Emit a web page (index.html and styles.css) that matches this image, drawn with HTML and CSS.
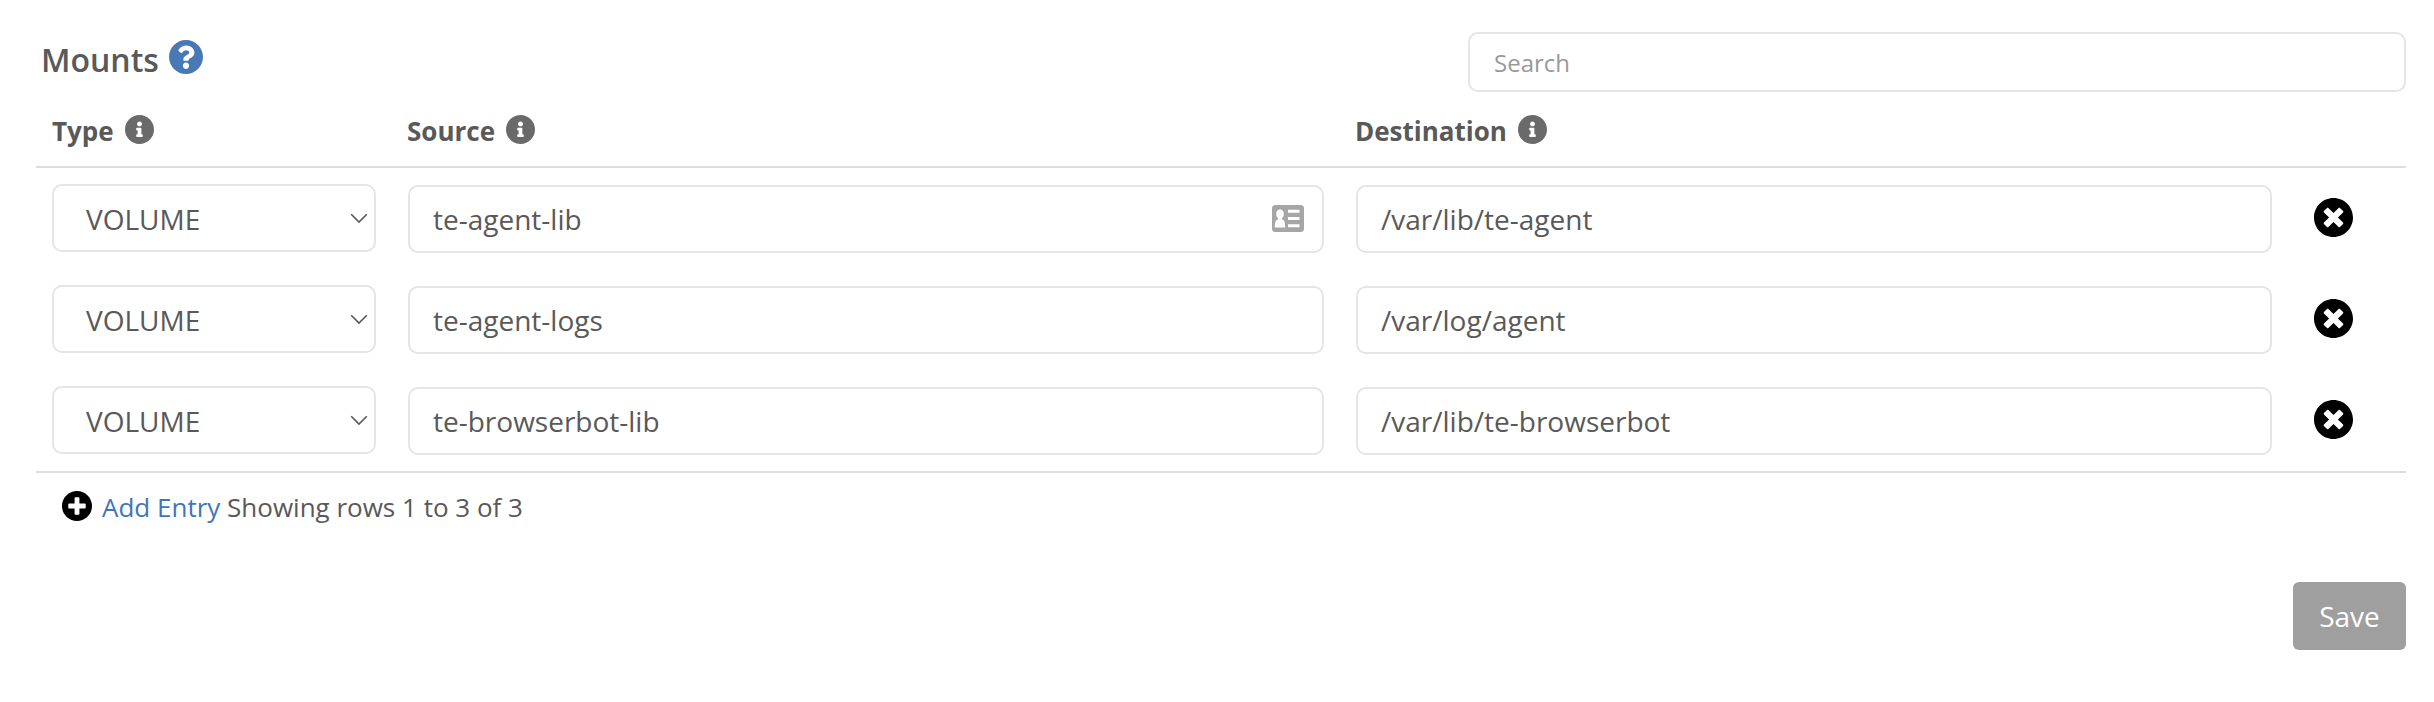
FILE: index.html
```
<!DOCTYPE html>
<html lang="en">
<head>
<meta charset="utf-8">
<title>Mounts</title>
<link rel="stylesheet" href="styles.css">
</head>
<body>
<svg class="defs" width="0" height="0" aria-hidden="true">
  <symbol id="i-question" viewBox="8 8 496 496"><path d="M504 256c0 136.997-111.043 248-248 248S8 392.997 8 256C8 119.083 119.043 8 256 8s248 111.083 248 248zM262.655 90c-54.497 0-89.255 22.957-116.549 63.758-3.536 5.286-2.353 12.415 2.715 16.258l34.699 26.31c5.205 3.947 12.621 3.008 16.665-2.122 17.864-22.658 30.113-35.797 57.303-35.797 20.429 0 45.698 13.148 45.698 32.958 0 14.976-12.363 22.667-32.534 33.976C247.128 238.528 216 254.941 216 296v4c0 6.627 5.373 12 12 12h56c6.627 0 12-5.373 12-12v-1.333c0-28.462 83.186-29.647 83.186-106.667 0-58.002-60.165-102-116.531-102zM256 338c-25.365 0-46 20.635-46 46 0 25.364 20.635 46 46 46s46-20.636 46-46c0-25.365-20.635-46-46-46z"/></symbol>
  <symbol id="i-info" viewBox="8 8 496 496"><path d="M256 8C119.043 8 8 119.083 8 256c0 136.997 111.043 248 248 248s248-111.003 248-248C504 119.083 392.957 8 256 8zm0 110c23.196 0 42 18.804 42 42s-18.804 42-42 42-42-18.804-42-42 18.804-42 42-42zm56 254c0 6.627-5.373 12-12 12h-88c-6.627 0-12-5.373-12-12v-24c0-6.627 5.373-12 12-12h12v-64h-12c-6.627 0-12-5.373-12-12v-24c0-6.627 5.373-12 12-12h64c6.627 0 12 5.373 12 12v100h12c6.627 0 12 5.373 12 12v24z"/></symbol>
  <symbol id="i-remove" viewBox="8 8 496 496"><path d="M256 8C119 8 8 119 8 256s111 248 248 248 248-111 248-248S393 8 256 8zm121.600 313.100c4.700 4.700 4.700 12.300 0 17L338 377.600c-4.700 4.700-12.300 4.700-17 0L256 312l-65.100 65.600c-4.700 4.700-12.300 4.700-17 0L134.400 338c-4.700-4.700-4.700-12.300 0-17l65.600-65-65.600-65.100c-4.700-4.700-4.700-12.300 0-17l39.600-39.600c4.700-4.700 12.300-4.700 17 0l65 65.700 65.100-65.600c4.700-4.700 12.300-4.700 17 0l39.600 39.600c4.700 4.700 4.700 12.300 0 17L312 256l65.600 65.100z"/></symbol>
  <symbol id="i-plus" viewBox="8 8 496 496"><path d="M256 8C119 8 8 119 8 256s111 248 248 248 248-111 248-248S393 8 256 8zm144 276c0 6.600-5.400 12-12 12h-92v92c0 6.600-5.400 12-12 12h-56c-6.600 0-12-5.400-12-12v-92h-92c-6.600 0-12-5.400-12-12v-56c0-6.600 5.400-12 12-12h92v-92c0-6.600 5.400-12 12-12h56c6.600 0 12 5.400 12 12v92h92c6.600 0 12 5.400 12 12v56z"/></symbol>
  <symbol id="i-chevron" viewBox="0 0 18 11"><path d="M1.200 1.200 9 9l7.800-7.800" fill="none" stroke="currentColor" stroke-width="1.600"/></symbol>
</svg>
<main class="mounts">
  <header class="top">
    <h2 class="title">Mounts <svg class="help"><use href="#i-question"/></svg></h2>
    <input class="field search" type="text" placeholder="Search">
  </header>
  <section class="table">
    <div class="row head">
      <div class="label">Type <svg class="info"><use href="#i-info"/></svg></div>
      <div class="label">Source <svg class="info"><use href="#i-info"/></svg></div>
      <div class="label">Destination <svg class="info"><use href="#i-info"/></svg></div>
    </div>
    <div class="row">
      <div class="select-wrap"><select class="field select"><option>VOLUME</option></select><svg class="chevron"><use href="#i-chevron"/></svg></div>
      <div class="input-wrap">
        <input class="field" type="text" value="te-agent-lib">
        <svg class="card" viewBox="0 0 32 27"><path fill="#a6a6a6" fill-rule="evenodd" d="M3.500 0h25A3.500 3.500 0 0 1 32 3.500v20a3.500 3.500 0 0 1-3.500 3.500h-25A3.500 3.500 0 0 1 0 23.500v-20A3.500 3.500 0 0 1 3.500 0zM16 4.800v3h11.500v-3zM16 12v3h11.500v-3zM16 19.200v3h11.500v-3zM8 4.500c-2.400 0-3.800 1.800-3.800 4.300 0 2 .8 3.600 1.800 4.500v1C4 15 2.800 16.500 2.800 22.500h10.400c0-6-1.200-7.500-3.200-8.200v-1c1-.9 1.800-2.500 1.800-4.500 0-2.500-1.400-4.300-3.800-4.300z"/></svg>
      </div>
      <input class="field" type="text" value="/var/lib/te-agent">
      <svg class="remove"><use href="#i-remove"/></svg>
    </div>
    <div class="row">
      <div class="select-wrap"><select class="field select"><option>VOLUME</option></select><svg class="chevron"><use href="#i-chevron"/></svg></div>
      <input class="field" type="text" value="te-agent-logs">
      <input class="field" type="text" value="/var/log/agent">
      <svg class="remove"><use href="#i-remove"/></svg>
    </div>
    <div class="row">
      <div class="select-wrap"><select class="field select"><option>VOLUME</option></select><svg class="chevron"><use href="#i-chevron"/></svg></div>
      <input class="field" type="text" value="te-browserbot-lib">
      <input class="field" type="text" value="/var/lib/te-browserbot">
      <svg class="remove"><use href="#i-remove"/></svg>
    </div>
  </section>
  <div class="summary"><svg class="plus"><use href="#i-plus"/></svg><span><a class="add">Add Entry</a> Showing rows 1 to 3 of 3</span></div>
  <footer class="actions"><button class="save" type="button">Save</button></footer>
</main>
</body>
</html>
```
FILE: styles.css
```
* {
  box-sizing: border-box;
}

body {
  margin: 0;
  background: #fff;
  color: #595959;
  font-family: "Open Sans", sans-serif;
  font-size: 26px;
}

svg {
  display: block;
  flex: none;
  fill: currentColor;
}

.defs {
  position: absolute;
}

.mounts {
  padding: 32px 28px 0 36px;
}

.top {
  display: flex;
  justify-content: space-between;
  height: 76px;
}

.title {
  display: flex;
  gap: 10px;
  margin: 6px 0 0 5px;
  font-size: 32px;
  font-weight: 600;
  line-height: 44px;
}

.help {
  width: 34px;
  height: 34px;
  margin-top: 2px;
  color: #4878b6;
}

.field {
  display: block;
  width: 100%;
  height: 68px;
  padding: 0 23px;
  border: 2px solid #e5e5e5;
  border-radius: 10px;
  background: #fff;
  color: #595959;
  font: 28px "Open Sans", sans-serif;
  outline: none;
}

.search {
  width: 938px;
  height: 60px;
  padding: 1px 24px 0;
  font-size: 24px;
}

.search::placeholder {
  color: #999;
  opacity: 1;
}

.table {
  border-bottom: 2px solid #ddd;
}

.row {
  display: grid;
  grid-template-columns: 324px 916px 916px 40px;
  column-gap: 32px;
  height: 101px;
  padding: 17px 0 0 16px;
}

.head {
  height: 60px;
  padding-top: 0;
  border-bottom: 2px solid #ddd;
}

.label {
  display: flex;
  gap: 11px;
  padding-top: 5px;
  font-weight: 700;
  line-height: 36px;
}

.label + .label {
  margin-left: -1px;
}

.info {
  width: 29px;
  height: 29px;
  margin-top: 2px;
  color: #6a6a6a;
}

.select-wrap {
  position: relative;
  margin-top: -1px;
}

.select {
  padding: 2px 32px 0;
  appearance: none;
}

.chevron {
  position: absolute;
  top: 29px;
  right: 8px;
  width: 18px;
  height: 11px;
}

.input-wrap {
  position: relative;
}

.card {
  position: absolute;
  top: 20px;
  right: 20px;
  width: 32px;
  height: 27px;
}

.remove {
  width: 39px;
  height: 39px;
  margin: 12.500px 0 0 10px;
  color: #000;
}

.summary {
  display: flex;
  gap: 10px;
  padding: 16px 0 0 26px;
  line-height: 36px;
}

.plus {
  width: 30px;
  height: 30px;
  margin-top: 2px;
  color: #000;
}

.add {
  color: #3f76bb;
}

.actions {
  display: flex;
  justify-content: flex-end;
  margin-top: 57px;
}

.save {
  width: 113px;
  height: 68px;
  padding: 0;
  border: 0;
  border-radius: 6px;
  background: #9f9f9f;
  color: #fff;
  font: 28px "Open Sans", sans-serif;
}
```
